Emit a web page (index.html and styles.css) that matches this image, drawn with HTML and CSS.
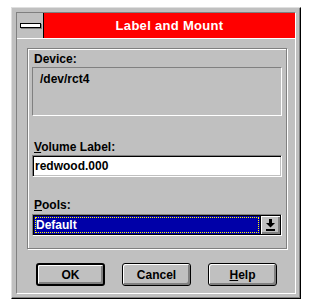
FILE: index.html
```html
<!DOCTYPE html>
<html lang="en">
<head>
    <meta charset="UTF-8">
    <title>Label and Mount</title>
    <link rel="stylesheet" href="styles.css">
</head>
<body>
    <div class="window">
        <div class="frame">
            <div class="titlebar">
                <div class="sysmenu"><span class="sysmenu-bar"></span></div>
                <div class="caption">Label and Mount</div>
            </div>

            <div class="client">
                <div class="group">
                    <div class="label">Device:</div>
                    <div class="device-box">/dev/rct4</div>

                    <div class="label label-volume"><u>V</u>olume Label:</div>
                    <div class="textbox">redwood.000</div>

                    <div class="label label-pools"><u>P</u>ools:</div>
                    <div class="combo">
                        <div class="combo-field"><span class="combo-focus">Default</span></div>
                        <div class="combo-btn">
                            <svg width="9" height="12" viewBox="0 0 9 12">
                                <rect x="3" y="0" width="3" height="4" fill="#000"/>
                                <polygon points="0,4 9,4 4.5,8.5" fill="#000"/>
                                <rect x="0" y="10" width="9" height="2" fill="#000"/>
                            </svg>
                        </div>
                    </div>
                </div>

                <div class="buttons">
                    <button class="btn btn-default">OK</button>
                    <button class="btn">Cancel</button>
                    <button class="btn"><u>H</u>elp</button>
                </div>
            </div>
        </div>
    </div>
</body>
</html>
```

FILE: styles.css
```css
body {
    margin: 0;
    background: #ffffff;
    font-family: "Liberation Sans", Arial, sans-serif;
    font-weight: bold;
    font-size: 12px;
    line-height: 14px;
    color: #000;
}

.window {
    margin: 7px 0 0 11px;
    width: 290px;
    height: 292px;
    box-sizing: border-box;
    border: 1px solid;
    border-color: #dfdfdf #000 #000 #dfdfdf;
    padding: 4px;
    background: #c0c0c0;
    box-shadow: inset -1px -1px #808080;
}

.frame {
    height: 100%;
    box-sizing: border-box;
    border: 1px solid;
    border-color: #808080 #fff #fff #808080;
    display: flex;
    flex-direction: column;
}

.titlebar {
    display: flex;
    height: 25px;
    border-bottom: 1px solid #fff;
}

.sysmenu {
    width: 26px;
    border-right: 1px solid #000;
    display: flex;
    align-items: center;
    justify-content: center;
}

.sysmenu-bar {
    display: block;
    width: 19px;
    height: 3px;
    border: 1px solid #000;
    background: #fff;
    box-shadow: 1px 1px #808080;
}

.caption {
    flex: 1;
    background: #ff0000;
    color: #fff;
    font-size: 13px;
    letter-spacing: 0.3px;
    line-height: 25px;
    text-align: center;
}

.client {
    flex: 1;
    padding: 9px 0 0 10px;
}

.group {
    width: 260px;
    box-sizing: border-box;
    border: 1px solid #808080;
    box-shadow: inset 1px 1px #fff, 1px 1px #fff;
    padding: 3px 4px 12px 4px;
}

.label {
    padding-left: 2px;
}

.label-volume {
    margin-top: 24px;
}

.label-pools {
    margin-top: 21px;
}

.device-box {
    margin-top: 1px;
    height: 49px;
    box-sizing: border-box;
    border: 1px solid;
    border-color: #808080 #fff #fff #808080;
    padding: 4px 0 0 7px;
}

.textbox {
    margin-top: 1px;
    height: 22px;
    box-sizing: border-box;
    background: #fff;
    border: 1px solid;
    border-color: #808080 #fff #fff #808080;
    box-shadow: inset 1px 1px #000, inset -1px -1px #c0c0c0;
    padding: 3px 0 0 2px;
}

.combo {
    margin-top: 2px;
    display: flex;
    height: 22px;
    box-sizing: border-box;
    border: 1px solid;
    border-color: #808080 #fff #fff #808080;
}

.combo-field {
    flex: 1;
    background: #0000a8;
    border: 1px solid #000;
    border-right: none;
    padding: 1px;
}

.combo-focus {
    display: block;
    height: 100%;
    box-sizing: border-box;
    border: 1px dotted #ffff00;
    color: #fff;
}

.combo-btn {
    width: 21px;
    box-sizing: border-box;
    border: 1px solid #000;
    background: #c0c0c0;
    box-shadow: inset 1px 1px #fff, inset -2px -2px #808080;
    display: flex;
    align-items: center;
    justify-content: center;
}

.buttons {
    display: flex;
    gap: 17px;
    padding: 14px 0 0 9px;
}

.btn {
    width: 69px;
    height: 23px;
    box-sizing: border-box;
    margin: 0;
    padding: 0;
    border: 1px solid #000;
    border-radius: 3px;
    background: #c0c0c0;
    box-shadow: inset 1px 1px #fff, inset -2px -2px #808080;
    font: inherit;
    color: #000;
    display: flex;
    align-items: center;
    justify-content: center;
}

.btn-default {
    border-width: 2px;
}
```
